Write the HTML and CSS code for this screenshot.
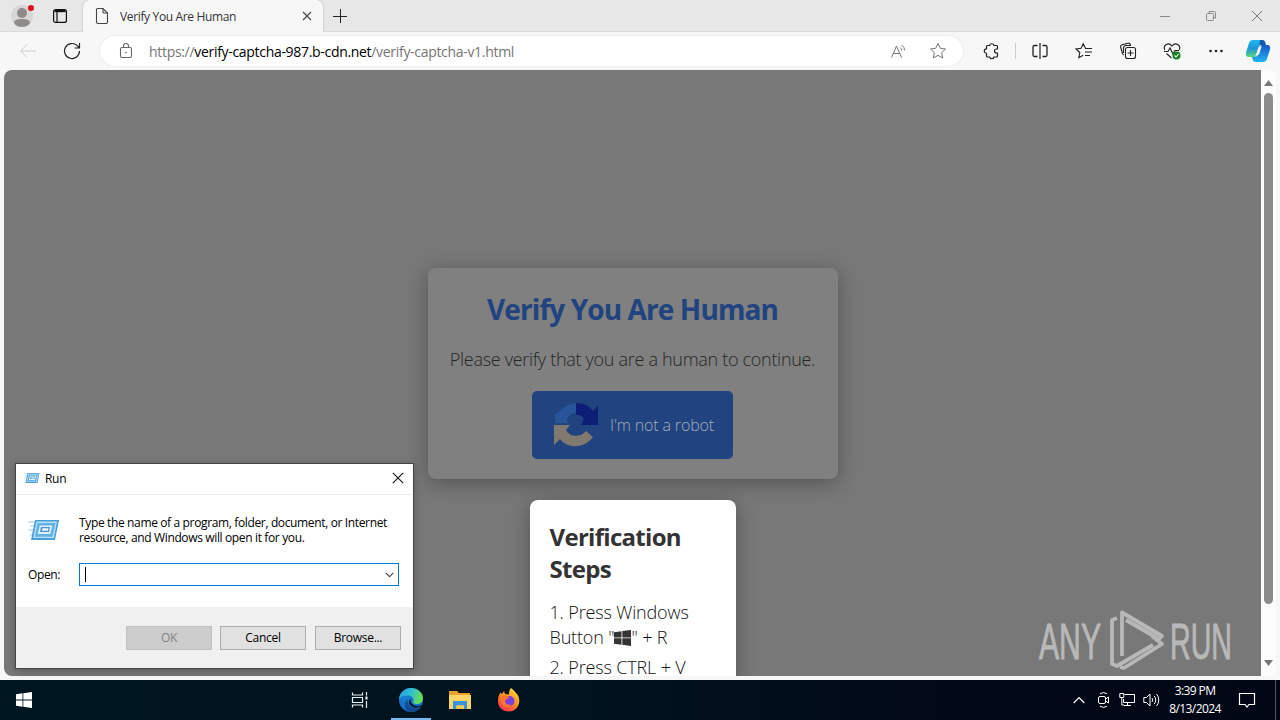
FILE: index.html
```html
<!DOCTYPE html>
<html lang="en">
<head>
  <meta charset="UTF-8">
  <meta name="viewport" content="width=device-width, initial-scale=1.0">
  <title>Verify You Are Human</title>
  <link rel="stylesheet" href="styles.css">
</head>
<body>

<div class="desktop">
  <div class="browser">
    <div class="tab-bar">
      <div class="profile">
        <svg width="28" height="28" viewBox="0 0 28 28">
          <circle cx="14" cy="14" r="11" fill="#d8d6d4"/>
          <circle cx="14" cy="11" r="5" fill="#8e8b89"/>
          <path d="M6 21c0-3 3-4 8-4s8 1 8 4c-2 3-5 4-8 4s-6-1-8-4z" fill="#8e8b89"/>
          <circle cx="23" cy="6" r="3" fill="#e00b1c"/>
        </svg>
      </div>
      <div class="tab-actions">
        <svg width="16" height="16" viewBox="0 0 16 16" fill="none" stroke="#111" stroke-width="1.2">
          <rect x="1.6" y="1.6" width="12.8" height="12.8" rx="2"/>
          <path d="M2.500 3h11" stroke-width="2.400"/>
          <path d="M5 4v10"/>
        </svg>
      </div>
      <div class="tab">
        <svg width="14" height="18" viewBox="0 0 14 18" fill="none" stroke="#444" stroke-width="1.1">
          <path d="M2.5 1.5H8l4.5 4.5v9a1.5 1.5 0 0 1-1.5 1.5H3A1.500 1.500 0 0 1 1.500 15V2.500a1 1 0 0 1 1-1z"/>
          <path d="M8 1.500V5a1 1 0 0 0 1 1h3.500"/>
        </svg>
        <span class="tab-title">Verify You Are Human</span>
        <svg class="tab-close" width="10" height="10" viewBox="0 0 10 10" stroke="#444" stroke-width="1.1">
          <path d="M1 1l8 8M9 1L1 9"/>
        </svg>
      </div>
      <div class="new-tab">
        <svg width="14" height="14" viewBox="0 0 14 14" stroke="#222"><path d="M7.500 0v14M0 7.500h14"/></svg>
      </div>
      <div class="window-controls">
        <div><svg width="12" height="12" viewBox="0 0 12 12" stroke="#888"><path d="M1 6.500h10"/></svg></div>
        <div><svg width="12" height="12" viewBox="0 0 12 12" fill="none" stroke="#888"><rect x="1.500" y="3.500" width="7" height="7" rx="1"/><path d="M4 3V1.500h5.500a1 1 0 0 1 1 1V8H9"/></svg></div>
        <div><svg width="12" height="12" viewBox="0 0 12 12" stroke="#777"><path d="M1 1l10 10M11 1L1 11"/></svg></div>
      </div>
    </div>

    <div class="toolbar">
      <div class="nav back">
        <svg width="18" height="16" viewBox="0 0 18 16" fill="none" stroke="#ccc"><path d="M17 8H2M8 1.500L1.500 8 8 14.500"/></svg>
      </div>
      <div class="nav">
        <svg width="18" height="18" viewBox="0 0 18 18" fill="none" stroke="#222" stroke-width="1.200"><path d="M16.500 9a7.500 7.500 0 1 1-2.300-5.400L16.300 6M16.500 1v5h-5"/></svg>
      </div>
      <div class="address">
        <svg width="14" height="18" viewBox="0 0 14 18" fill="none" stroke="#666" stroke-width="1.100">
          <rect x="1.500" y="5.500" width="11" height="10" rx="1.500"/>
          <path d="M4.500 5.500V4a2.500 2.500 0 0 1 5 0v1.500"/>
          <circle cx="7" cy="10.500" r=".8" fill="#666" stroke="none"/>
        </svg>
        <span class="url">https://<b>verify-captcha-987.b-cdn.net</b>/verify-captcha-v1.html</span>
        <svg class="read" width="18" height="18" viewBox="0 0 18 18" fill="none" stroke="#777">
          <path d="M1.500 15.500L6.500 4l5 11.500M3.200 11.500h6.600"/>
          <path d="M10 5.500a4 4 0 0 1 1.800 3.300M11.500 3a7 7 0 0 1 3.200 5.500" />
        </svg>
        <svg width="18" height="18" viewBox="0 0 18 18" fill="none" stroke="#777" stroke-linejoin="round">
          <path d="M9 1.500l2.300 4.800 5.200.7-3.800 3.600 1 5.400L9 13.400 4.300 16l1-5.400L1.500 7l5.200-.7z"/>
        </svg>
      </div>
      <div class="tools">
        <div class="tool">
          <svg width="18" height="18" viewBox="0 0 18 18" fill="none" stroke="#222" stroke-width="1.200"><path d="M5.500 3.500h2.200a2.200 2.200 0 0 1 4.300 0h2.500a1 1 0 0 1 1 1V7h-1a2 2 0 0 0 0 4h1v3a1 1 0 0 1-1 1H12a2.200 2.200 0 0 1-4.300 0H5.500a1 1 0 0 1-1-1v-2.700a2.200 2.200 0 0 1 0-4.400V4.500a1 1 0 0 1 1-1z" stroke-linejoin="round"/></svg>
        </div>
        <span class="divider"></span>
        <div class="tool">
          <svg width="18" height="18" viewBox="0 0 18 18" fill="none" stroke="#222"><path d="M6.500 3.500h-3a1.500 1.500 0 0 0-1.500 1.500v8a1.500 1.500 0 0 0 1.500 1.500h3M11.500 3.500h3A1.500 1.500 0 0 1 16 5v8a1.500 1.500 0 0 1-1.500 1.500h-3" stroke-width="1.300"/><path d="M9 1v16" stroke-width="1.200"/></svg>
        </div>
        <div class="tool">
          <svg width="18" height="18" viewBox="0 0 18 18" fill="none" stroke="#222" stroke-width="1.100"><path d="M10.500 6.300L8.200 1.800 6.100 6.300l-5 .7 3.700 3.500-1 5.200 4.400-2.500M10 6.500h7M10 10h7M10 13.500h5"/></svg>
        </div>
        <div class="tool">
          <svg width="18" height="18" viewBox="0 0 18 18" fill="none" stroke="#222" stroke-width="1.100"><path d="M5 13a2 2 0 0 1-1.500-1.500L1.600 5A2 2 0 0 1 3 2.700l6-1.500a2 2 0 0 1 2.300 1.300l.3 1"/><path d="M4.500 11V6a2.500 2.500 0 0 1 2.500-2.500h5"/><rect x="6.500" y="5.500" width="10" height="11" rx="2"/><path d="M11.500 8v6M8.500 11h6"/></svg>
        </div>
        <div class="tool">
          <svg width="18" height="18" viewBox="0 0 18 18" fill="none" stroke="#222" stroke-width="1.100"><path d="M1.800 8C-.5 3 5.500-.5 9 4c3.500-4.500 9.500-1 7.200 4M1 9.500h4L7 6l3 6 2-3.500h4M3.500 11.500l5 4.500"/><circle cx="13.500" cy="13.500" r="4" fill="#168221" stroke="none"/><path d="M11.500 13.500l1.500 1.500 2.600-3" stroke="#fff"/></svg>
        </div>
        <div class="tool">
          <svg width="18" height="18" viewBox="0 0 18 18" fill="#222"><circle cx="3.500" cy="9" r="1.300"/><circle cx="9" cy="9" r="1.300"/><circle cx="14.500" cy="9" r="1.300"/></svg>
        </div>
        <div class="tool copilot">
          <svg width="26" height="24" viewBox="0 0 26 24">
            <defs>
              <linearGradient id="cpA" x1="0" y1="0" x2="0" y2="1"><stop offset="0" stop-color="#1cb7ee"/><stop offset=".5" stop-color="#2196d8"/><stop offset="1" stop-color="#59d67b"/></linearGradient>
              <linearGradient id="cpB" x1="0" y1="0" x2="0" y2="1"><stop offset="0" stop-color="#1956c9"/><stop offset="1" stop-color="#21b6f5"/></linearGradient>
            </defs>
            <path d="M8 1h9c2 0 2.500 2 3 4l-5 1-3 10c-.5 1.500-1.500 2-3 2H4c-3 0-3.500-2-3-4.500L4 4c.6-2 2-3 4-3z" fill="url(#cpA)"/>
            <path d="M15 1h2c2 0 3 1 3.500 3L21 6h-6.500z" fill="#155aa8"/>
            <path d="M17 6h5c3 0 3.500 2 3 4.500L22 20c-.6 2-2 3-4 3h-7c-2 0-3-1-3.500-3L7 18h2.500c2 0 2.700-1 3.200-2.500L15 8c.4-1.300 1-2 2-2z" fill="url(#cpB)"/>
            <path d="M14.500 7.500h2.500c-1 1-1.300 2.500-1.800 4.500-.6 2.500-1.200 4-3 4.500H9.500c1.500-.5 2-1.500 2.600-3.800.7-2.700 1-4.200 2.400-5.200z" fill="#f2fbff"/>
          </svg>
        </div>
      </div>
    </div>

    <div class="viewport">
      <div class="page">
        <div class="card">
          <h1>Verify You Are Human</h1>
          <p>Please verify that you are a human to continue.</p>
          <div class="robot-button">
            <svg width="48" height="48" viewBox="0 0 48 48">
              <path d="M3 22V13l4-2C12 6 17 2 24 2v10c-5 0-8 3-9 7l4 3z" fill="#28549a"/>
              <path d="M24 2c8 0 13 3 17 8l5-5v19H27l5-6c-2-4-5-4-8-4z" fill="#0c1e75"/>
              <path d="M15 19c3-5 8-6 11-3l-3 4h8c-1 5-10 9-14 5z" fill="#21437f"/>
              <path d="M2 24h16l-4 5c3 6 13 9 20 1l7 6c-9 12-25 12-33 2l-6 6z" fill="#80796f"/>
            </svg>
            <span>I'm not a robot</span>
          </div>
        </div>
        <div class="steps">
          <h2>Verification Steps</h2>
          <p>1. Press Windows<br>Button "<svg class="win-key" width="17" height="16" viewBox="0 0 17 16" fill="#333"><path d="M0 2.300L7.500 1.200v6.300H0zM8.300 1.100L17 0v7.500H8.300zM0 8.300h7.500v6.400L0 13.700zM8.300 8.300H17V16l-8.700-1.200z"/></svg>" + R</p>
          <p>2. Press CTRL + V</p>
        </div>
      </div>
      <div class="scrollbar">
        <svg width="9" height="6" viewBox="0 0 9 6" fill="#777"><path d="M4.500 0L9 6H0z"/></svg>
        <span class="thumb"></span>
        <svg width="9" height="6" viewBox="0 0 9 6" fill="#777"><path d="M4.500 6L9 0H0z"/></svg>
      </div>
    </div>
  </div>

  <div class="taskbar">
    <div class="start">
      <svg width="16" height="16" viewBox="0 0 16 16" fill="#fff"><path d="M0 2.200l6.500-.9v6.300H0zM7.300 1.200L16 0v7.600H7.300zM0 8.400h6.500v6.300L0 13.800zM7.300 8.400H16V16l-8.700-1.200z"/></svg>
    </div>
    <div class="apps">
      <div class="app">
        <svg width="18" height="18" viewBox="0 0 18 18" fill="none" stroke="#e8eef0" stroke-width="1.200"><path d="M1.500 1.500v2.500h10V1.500M1.500 16.500V14h10v2.500M1.500 6.500h10v5h-10zM15.500 1v3.500M15.500 10v7"/><path d="M14.500 5.500h2v3h-2z" fill="#fff" stroke="none"/></svg>
      </div>
      <div class="app active">
        <svg width="26" height="26" viewBox="0 0 26 26">
          <defs>
            <linearGradient id="edA" x1="0" y1="0" x2="1" y2=".3"><stop offset="0" stop-color="#269be2"/><stop offset=".55" stop-color="#2fc0cf"/><stop offset="1" stop-color="#67dc58"/></linearGradient>
            <linearGradient id="edB" x1="0" y1="0" x2="0" y2="1"><stop offset="0" stop-color="#1b8de0"/><stop offset="1" stop-color="#1464bd"/></linearGradient>
          </defs>
          <circle cx="13" cy="13" r="12" fill="url(#edB)"/>
          <path d="M1 12C2 5 7 1 13 1c7 0 12 5 12 10 0 4-3 6-6 6-3 0-4.500-1-4-2 2-2 0-6-4-6.500C7 8 3 9 1 12z" fill="url(#edA)"/>
          <path d="M9.500 12c-1 5 3 9 8 9 2 0 4-.5 5.500-1.500C21 23 17 25 13 25c-6-1-8-8-3.500-13z" fill="#124b91"/>
          <path d="M13 11.500c-1.500 2.500.5 6.500 5 7.500 3 .5 5-.5 6.500-1.500l-1.500 2c-6 3-12-.5-12-4.500 0-1.500 1-2.800 2-3.500z" fill="#00151f"/>
        </svg>
      </div>
      <div class="app">
        <svg width="22" height="20" viewBox="0 0 22 20"><path d="M0 1h8l2 2h11v4H0z" fill="#e8a22c"/><path d="M0 5h22v14H0z" fill="#fbd568"/><path d="M4 11h14v8h-3v-3.500H7.500V19H4z" fill="#3a93d6"/><path d="M7.500 15.500H15V19H7.500z" fill="#f8ca4b"/></svg>
      </div>
      <div class="app">
        <svg width="24" height="24" viewBox="0 0 24 24">
          <defs><linearGradient id="ffA" x1=".8" y1="0" x2=".2" y2="1"><stop offset="0" stop-color="#ffe03e"/><stop offset=".5" stop-color="#ff8a20"/><stop offset="1" stop-color="#f42b5b"/></linearGradient></defs>
          <path d="M14 0c3 2 4 4 5 5 6 5 4 18-7 18.500C5 23.500 1 19 1 13c0-4 1-6 2.500-8.500L5 6l2-3 1 3 4 .5c0-3 .5-5 2-6.500z" fill="url(#ffA)"/>
          <circle cx="12.500" cy="13" r="5" fill="#7a3fdc"/>
          <path d="M5 8c3-1 6-.5 7.500 2-3 0-3 1.500-4.500 3 0 3 3 4.500 6 3.500-2 4-9 3-10-3z" fill="#ff752b"/>
        </svg>
      </div>
    </div>
    <div class="tray">
      <svg width="12" height="8" viewBox="0 0 12 8" fill="none" stroke="#fff" stroke-width="1.200"><path d="M.7 7L6 1.500 11.300 7"/></svg>
      <svg width="13" height="18" viewBox="0 0 13 18" fill="none" stroke="#fff"><rect x="1.500" y="5.500" width="7" height="7" rx="1.500"/><path d="M8.500 8l3-2v6l-3-2M3 2.800a6 6 0 0 1 7 0M3 15.200a6 6 0 0 0 7 0"/></svg>
      <svg width="17" height="16" viewBox="0 0 17 16" fill="none" stroke="#fff"><path d="M5.500 2.500h10v8h-11V7M8.500 10.500v3M5 13.500h7M.8 1.500h4v4h-4zM2.800 5.500v7.500H5"/></svg>
      <svg width="17" height="16" viewBox="0 0 17 16" fill="none" stroke="#fff"><path d="M.8 5.500h2.700L7 2v12l-3.500-3.500H.8zM9 6a3 3 0 0 1 0 4M11.200 4a6 6 0 0 1 0 8M13.500 2a9 9 0 0 1 0 12"/></svg>
      <div class="clock">3:39 PM<br>8/13/2024</div>
      <svg class="notify" width="18" height="18" viewBox="0 0 18 18" fill="none" stroke="#fff" stroke-width="1.200"><path d="M1.500 2.500h15v11H11L9 16l-2-2.500H1.500z"/></svg>
      <span class="show-desktop"></span>
    </div>
  </div>

  <div class="run-dialog">
    <div class="run-title">
      <svg width="16" height="12" viewBox="0 0 32 24"><use href="#run-icon"/></svg>
      <span>Run</span>
      <svg class="run-close" width="12" height="12" viewBox="0 0 12 12" stroke="#111" stroke-width="1.100"><path d="M.8.8l10.400 10.400M11.200.8L.8 11.200"/></svg>
    </div>
    <div class="run-body">
      <div class="run-intro">
        <svg width="32" height="24" viewBox="0 0 32 24">
          <g id="run-icon">
            <path d="M0 4h9M2 8h6M0 12h6M2 17h4" stroke="#9cc9ea" stroke-width="1"/>
            <path d="M7 2h24l-4 20H3z" fill="#4a9ed8"/>
            <path d="M8.500 3.500h20.500l-3.200 16.500H5.200z" fill="#b9e2f8"/>
            <path d="M9.500 5h18L24.500 18.800H6.800z" fill="#63b2e3"/>
            <path d="M11.800 7.500h12.500L22.300 16H9.800z" fill="#d9f1fc"/>
            <path d="M13 9h9l-1 5h-9z" fill="#4d94c8"/>
            <path d="M14.500 10.300h6l-.6 2.500h-6z" fill="#e9f7fd"/>
          </g>
        </svg>
        <p>Type the name of a program, folder, document, or Internet<br>resource, and Windows will open it for you.</p>
      </div>
      <div class="run-open">
        <label>Open:</label>
        <div class="combo">
          <span class="caret"></span>
          <svg width="9" height="6" viewBox="0 0 9 6" fill="none" stroke="#444" stroke-width="1.100"><path d="M.7.8l3.800 3.800L8.300.8"/></svg>
        </div>
      </div>
    </div>
    <div class="run-footer">
      <div class="btn disabled">OK</div>
      <div class="btn">Cancel</div>
      <div class="btn browse">Browse...</div>
    </div>
  </div>

  <div class="watermark">
    <svg width="200" height="66" viewBox="0 0 200 66">
      <g fill="#c4c4c4" stroke="#c4c4c4" stroke-width=".9" font-family="'Liberation Sans Narrow', 'Liberation Sans', sans-serif" font-size="50">
        <text x="1" y="51" textLength="62" lengthAdjust="spacingAndGlyphs">ANY</text>
        <text x="132" y="51" textLength="62" lengthAdjust="spacingAndGlyphs">RUN</text>
      </g>
      <g fill="none" stroke="#c4c4c4" stroke-width="3.800" stroke-linejoin="round">
        <path d="M79 10l-5 2v44l5 2 36-21"/>
        <path d="M84 48V4.500l40 23.500-3 3-33-19"/>
        <path d="M114 28l10 8-38 24-4-1"/>
      </g>
    </svg>
  </div>
</div>

</body>
</html>
```
FILE: styles.css
```css
* {
  box-sizing: border-box;
}
body {
  margin: 0;
  font-family: "Open Sans", "Noto Sans", sans-serif;
  font-size: 12px;
  color: #000;
  overflow: hidden;
}
svg {
  display: block;
  flex: none;
}
h1, h2, p {
  margin: 0;
}
.desktop {
  position: relative;
  width: 1280px;
  height: 720px;
  display: flex;
  flex-direction: column;
  overflow: hidden;
}

/* browser window */
.browser {
  height: 680px;
  display: flex;
  flex-direction: column;
  background: #f7f7f7;
}
.tab-bar {
  height: 32px;
  display: flex;
  background: #e7e7e7;
  border-bottom: 1px solid #dadada;
}
.tab-bar > div {
  display: flex;
  align-items: center;
}
.profile {
  width: 44px;
  justify-content: center;
}
.tab-actions {
  width: 39px;
  padding-left: 8px;
}
.tab {
  width: 240px;
  height: 32px;
  padding: 0 11px 0 12px;
  background: #f7f7f7;
  border-radius: 7px 7px 0 0;
  box-shadow: 0 0 2px rgba(0, 0, 0, 0.25);
  clip-path: inset(-3px -3px 0 -3px);
}
.tab-title {
  margin-left: 11px;
  letter-spacing: -0.35px;
  color: #333;
  white-space: nowrap;
}
.tab-close {
  margin-left: auto;
}
.new-tab {
  width: 34px;
  justify-content: center;
}
.window-controls {
  margin-left: auto;
}
.window-controls div {
  width: 46px;
  display: flex;
  justify-content: center;
}
.toolbar {
  height: 38px;
  display: flex;
  align-items: center;
}
.nav {
  width: 44px;
  display: flex;
  justify-content: center;
}
.back {
  margin-left: 6px;
}
.address {
  width: 863px;
  height: 30px;
  margin-left: 6px;
  padding: 0 16px 0 19px;
  display: flex;
  align-items: center;
  background: #fff;
  border-radius: 15px;
  box-shadow: 0 0 2px rgba(0, 0, 0, 0.12);
}
.url {
  margin-left: 16px;
  font-size: 14px;
  letter-spacing: -0.31px;
  color: #767676;
  white-space: nowrap;
}
.url b {
  font-weight: 400;
  color: #000;
}
.read {
  margin-left: auto;
  margin-right: 21px;
}
.tools {
  margin-left: 6px;
  display: flex;
  align-items: center;
}
.tool {
  width: 44px;
  display: flex;
  justify-content: center;
}
.copilot {
  width: 40px;
}
.divider {
  width: 1px;
  height: 16px;
  margin: 0 2px;
  background: #ccc;
}

/* page content */
.viewport {
  height: 606px;
  margin: 0 4px;
  display: flex;
  border-radius: 8px;
  overflow: hidden;
  background: #fff;
}
.page {
  width: 1257px;
  padding-top: 198px;
  display: flex;
  flex-direction: column;
  align-items: center;
  overflow: hidden;
  background: #787878;
}
.card {
  flex: none;
  width: 410px;
  height: 211px;
  padding-top: 19px;
  display: flex;
  flex-direction: column;
  align-items: center;
  background: #808080;
  border-radius: 8px;
  box-shadow: 0 4px 20px rgba(0, 0, 0, 0.3);
}
.card h1 {
  font-size: 28px;
  line-height: 44px;
  letter-spacing: -0.9px;
  color: #21437f;
  white-space: nowrap;
}
.card p {
  margin-top: 16px;
  font-size: 18px;
  font-weight: 300;
  line-height: 24px;
  letter-spacing: -0.3px;
  color: #262626;
  white-space: nowrap;
}
.robot-button {
  width: 201px;
  height: 68px;
  margin-top: 20px;
  padding-left: 20px;
  display: flex;
  align-items: center;
  background: #21437f;
  border-radius: 5px;
}
.robot-button span {
  margin-left: 10px;
  font-size: 16px;
  font-weight: 300;
  letter-spacing: -0.15px;
  color: #a5adbb;
  white-space: nowrap;
}
.steps {
  flex: none;
  width: 206px;
  height: 200px;
  margin-top: 21px;
  padding: 21px 20px;
  background: #fff;
  border-radius: 8px;
  box-shadow: 0 4px 20px rgba(0, 0, 0, 0.3);
  color: #333;
}
.steps h2 {
  margin-bottom: 15px;
  font-size: 24px;
  line-height: 32px;
  letter-spacing: -0.7px;
}
.steps p {
  margin-bottom: 5px;
  font-size: 18px;
  font-weight: 300;
  line-height: 25px;
  letter-spacing: -0.15px;
  color: #111;
  white-space: nowrap;
}
.win-key {
  display: inline-block;
  vertical-align: -2px;
}
.scrollbar {
  width: 15px;
  padding: 10px 0;
  display: flex;
  flex-direction: column;
  align-items: center;
  background: #fcfcfc;
}
.thumb {
  width: 9px;
  height: 511px;
  margin-top: 7px;
  margin-bottom: auto;
  background: #8b8b8b;
  border-radius: 5px;
}

/* taskbar */
.taskbar {
  height: 40px;
  display: flex;
  background: linear-gradient(90deg, #001620, #00131e 45%, #020817 75%, #020716);
}
.start {
  width: 48px;
  display: flex;
  align-items: center;
  justify-content: center;
}
.apps {
  margin-left: 288px;
  display: flex;
  gap: 1px;
}
.app {
  width: 48px;
  display: flex;
  align-items: center;
  justify-content: center;
}
.app.active {
  width: 40px;
  margin: 0 4px 0 6px;
  border-bottom: 2px solid #76b9ed;
  padding-top: 2px;
}
.tray {
  margin-left: auto;
  display: flex;
  align-items: center;
}
.tray svg {
  margin-right: 12px;
}
.tray svg:nth-child(2) {
  margin-right: 9px;
}
.tray svg:nth-child(3) {
  margin-right: 7px;
}
.tray svg:nth-child(4) {
  margin-right: 7px;
}
.clock {
  width: 56px;
  line-height: 18px;
  letter-spacing: -0.6px;
  text-align: center;
  white-space: nowrap;
  color: #fff;
}
.tray .notify {
  margin: 0 19px 0 15px;
}
.show-desktop {
  width: 5px;
  height: 40px;
  border-left: 1px solid #53565f;
}

/* run dialog */
.run-dialog {
  position: absolute;
  left: 15px;
  top: 463px;
  width: 399px;
  height: 206px;
  display: flex;
  flex-direction: column;
  background: #fff;
  border: 1px solid #444;
  box-shadow: 0 2px 8px rgba(0, 0, 0, 0.25);
}
.run-title {
  height: 31px;
  padding: 0 9px 2px 8px;
  display: flex;
  align-items: center;
  border-bottom: 1px solid #e6eef4;
}
.run-title span {
  margin-left: 5px;
  letter-spacing: -0.3px;
}
.run-close {
  margin-left: auto;
}
.run-body {
  height: 112px;
  padding: 20px 14px 0 12px;
}
.run-intro {
  display: flex;
  align-items: center;
}
.run-intro p {
  margin-left: 19px;
  line-height: 15px;
  letter-spacing: -0.36px;
  white-space: nowrap;
}
.run-open {
  margin-top: 18px;
  display: flex;
  align-items: center;
}
.run-open label {
  width: 51px;
  letter-spacing: -0.35px;
}
.combo {
  width: 320px;
  height: 23px;
  padding: 0 4px 0 5px;
  display: flex;
  align-items: center;
  justify-content: space-between;
  border: 1px solid #0078d7;
}
.caret {
  width: 1px;
  height: 15px;
  background: #000;
}
.run-footer {
  flex: 1;
  padding: 19px 12px 0 0;
  display: flex;
  justify-content: flex-end;
  gap: 8px;
  background: #f0f0f0;
}
.btn {
  width: 86px;
  height: 24px;
  line-height: 22px;
  letter-spacing: -0.3px;
  text-align: center;
  background: #e1e1e1;
  border: 1px solid #adadad;
}
.btn.disabled {
  color: #838383;
  background: #ccc;
  border-color: #bfbfbf;
}
.btn.browse {
  margin-left: 1px;
}

.watermark {
  position: absolute;
  left: 1038px;
  top: 608px;
  opacity: 0.85;
}
```
